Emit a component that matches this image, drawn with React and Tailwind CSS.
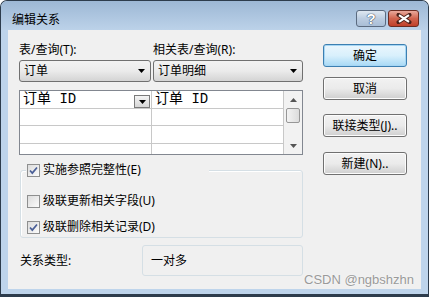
import { useState } from 'react';

const ui = { fontFamily: '"Noto Sans", "Noto Sans CJK SC", sans-serif' };
const mono = { fontFamily: '"Liberation Mono", "Noto Sans CJK SC", monospace' };

function Arrow({ className = '' }) {
  return (
    <svg width="7" height="4" viewBox="0 0 7 4" className={className}>
      <path d="M0 0h7L3.5 4z" fill="#000" />
    </svg>
  );
}

function Combo({ width, text }) {
  return (
    <div
      className={`${width} h-[22px] rounded-[3px] border border-[#707070] bg-gradient-to-b from-[#f2f2f2] via-[#ebebeb] to-[#d4d4d4] flex items-center pl-[4px] pr-[5px]`}
    >
      <span className="flex-1 text-[12px] leading-[14px] text-black">{text}</span>
      <Arrow />
    </div>
  );
}

function Button({ label, primary }) {
  return (
    <div
      className={`h-[23px] w-[84px] rounded-[3px] border flex items-center justify-center text-[12px] leading-[14px] text-black ${
        primary
          ? 'border-[#3c7fb1] bg-gradient-to-b from-[#eaf6fd] via-[#d9f0fc] to-[#a7d9f5] shadow-[inset_0_0_0_1px_#a6d6f4]'
          : 'border-[#707070] bg-gradient-to-b from-[#f2f2f2] via-[#ebebeb] to-[#cfcfcf] shadow-[inset_0_0_0_1px_#fcfcfc]'
      }`}
    >
      {label}
    </div>
  );
}

function Check({ checked, label }) {
  return (
    <div className="flex items-center h-[16px]">
      <div className="w-[13px] h-[13px] border border-[#8e8f8f] bg-gradient-to-br from-[#dcdcdc] to-[#fbfbfb] flex items-center justify-center">
        {checked && (
          <svg width="9" height="9" viewBox="0 0 9 9">
            <path d="M1 4.5l2.3 2.6L8 1.5" stroke="#4a5f97" strokeWidth="1.7" fill="none" />
          </svg>
        )}
      </div>
      <span className="ml-[3px] text-[12px] leading-[14px] text-black">{label}</span>
    </div>
  );
}

function GridRow({ last, left, right, drop }) {
  return (
    <div className={`flex ${last ? 'h-[10px]' : 'h-[18px] border-b border-[#c8c8c8]'}`}>
      <div className="w-[132px] border-r border-[#c8c8c8] bg-white flex items-center pl-[3px] relative">
        <span className="text-[14px] leading-[16px] text-black whitespace-pre" style={mono}>{left}</span>
        {drop && (
          <div className="absolute right-[1px] top-[4px] w-[16px] h-[13px] border border-[#7a7a7a] bg-gradient-to-b from-[#f4f4f4] to-[#d6d6d6] flex items-center justify-center">
            <Arrow />
          </div>
        )}
      </div>
      <div className="w-[131px] bg-white flex items-center pl-[3px]">
        <span className="text-[14px] leading-[16px] text-black whitespace-pre" style={mono}>{right}</span>
      </div>
    </div>
  );
}

export default function App() {
  const [checks] = useState({ e: true, u: false, d: true });

  return (
    <div className="w-[429px] h-[297px] relative overflow-hidden bg-white" style={ui}>
      <div className="w-[429px] h-[297px] border border-b-[3px] border-[#2d3c4c] rounded-t-[7px] bg-[#bed4eb] flex flex-col">
        {/* Title bar */}
        <div className="h-[29px] flex items-start bg-gradient-to-b from-[#9db8d5] to-[#bcd2e9] rounded-t-[6px] pl-[11px] pr-[9px]">
          <span className="mt-[12px] text-[12px] leading-[14px] text-black">编辑关系</span>
          <div className="flex-1" />
          <div className="mt-[9px] flex">
            <div className="w-[30px] h-[17px] rounded-[3px] border border-[#5b6b80] bg-gradient-to-b from-[#dfe8f1] via-[#bccde1] to-[#a9bed6] flex items-center justify-center">
              <span
                className="text-[15px] leading-[15px] font-bold text-white"
                style={{ fontFamily: '"Liberation Sans", sans-serif', textShadow: '0 0 1px #3d4d62, 0 0 1px #3d4d62, 0 0 1px #3d4d62' }}
              >
                ?
              </span>
            </div>
            <div className="ml-[2px] w-[31px] h-[17px] rounded-[3px] border border-[#6b2c22] bg-gradient-to-b from-[#e9a99c] via-[#d0634e] to-[#c0402a] flex items-center justify-center">
              <svg width="16" height="11" viewBox="0 0 16 11">
                <path
                  d="M2.5 1.8l5.5 3.7 5.5-3.7M2.5 9.2l5.5-3.7 5.5 3.7"
                  stroke="#4b2019"
                  strokeWidth="4"
                  fill="none"
                  strokeLinecap="round"
                />
                <path d="M3 2.2l5 3.3 5-3.3M3 8.8l5-3.3 5 3.3" stroke="#fff" strokeWidth="2.2" fill="none" />
              </svg>
            </div>
          </div>
        </div>

        {/* Client area */}
        <div className="mx-[7px] h-[259px] bg-[#f0f0f0] flex pl-[11px]">
          <div className="w-[284px] flex flex-col pt-[13px]">
            <div className="flex h-[14px]">
              <span className="w-[134px] text-[12px] leading-[14px] text-black">表/查询(T):</span>
              <span className="text-[12px] leading-[14px] text-black">相关表/查询(R):</span>
            </div>
            <div className="flex mt-[3px] gap-[2px]">
              <Combo width="w-[132px]" text="订单" />
              <Combo width="w-[150px]" text="订单明细" />
            </div>

            <div className="mt-[8px] h-[65px] border border-[#828790] flex">
              <div className="flex flex-col">
                <GridRow left="订单 ID" right="订单 ID" drop />
                <GridRow left="" right="" />
                <GridRow left="" right="" />
                <GridRow left="" right="" last />
              </div>
              <div className="flex-1 border-l border-[#c8c8c8] bg-[#f2f2f2] flex flex-col items-center">
                <svg width="7" height="4" viewBox="0 0 7 4" className="mt-[7px]">
                  <path d="M0 4h7L3.5 0z" fill="#555" />
                </svg>
                <div className="mt-[6px] w-[14px] h-[15px] rounded-[2px] border border-[#979797] bg-gradient-to-r from-[#f3f3f3] to-[#dcdcdc]" />
                <div className="flex-1" />
                <svg width="7" height="4" viewBox="0 0 7 4" className="mb-[6px]">
                  <path d="M0 0h7L3.5 4z" fill="#555" />
                </svg>
              </div>
            </div>

            {/* Group box */}
            <div className="mt-[15px] ml-[1px] h-[68px] rounded-[3px] border border-[#d5dfe5] shadow-[inset_1px_1px_0_#fff] relative pl-[6px] pt-[22px] flex flex-col gap-[10px]">
              <div className="absolute left-[5px] top-[-9px] w-[183px] bg-[#f0f0f0] pl-[1px]">
                <Check checked={checks.e} label="实施参照完整性(E)" />
              </div>
              <Check checked={checks.u} label="级联更新相关字段(U)" />
              <Check checked={checks.d} label="级联删除相关记录(D)" />
            </div>

            <div className="mt-[7px] flex items-center h-[31px]">
              <span className="w-[123px] pl-[1px] text-[12px] leading-[14px] text-black">关系类型:</span>
              <div className="flex-1 h-[31px] rounded-[3px] border border-[#d5dfe5] flex items-center pl-[8px]">
                <span className="text-[12px] leading-[14px] text-black">一对多</span>
              </div>
            </div>
          </div>

          <div className="ml-[20px] flex flex-col pt-[14px]">
            <Button label="确定" primary />
            <div className="mt-[10px]">
              <Button label="取消" />
            </div>
            <div className="mt-[14px]">
              <Button label="联接类型(J).." />
            </div>
            <div className="mt-[15px]">
              <Button label="新建(N).." />
            </div>
          </div>
        </div>
      </div>

      <span
        className="absolute left-[304px] top-[272px] text-[13px] leading-[16px] text-[#9a9a9a]"
        style={{ fontFamily: '"Liberation Sans", Arial, sans-serif', textShadow: '0 0 2px #fff' }}
      >
        CSDN @ngbshzhn
      </span>
    </div>
  );
}
